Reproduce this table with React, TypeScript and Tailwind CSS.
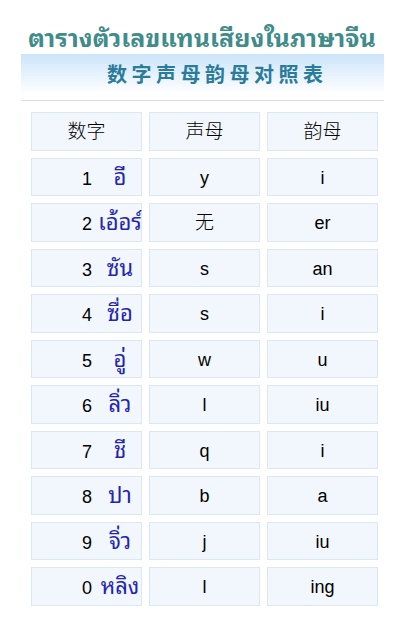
import React from "react";

const rows: [string, string, string, string][] = [
  ["1", "อี", "y", "i"],
  ["2", "เอ้อร์", "无", "er"],
  ["3", "ซัน", "s", "an"],
  ["4", "ซื่อ", "s", "i"],
  ["5", "อู่", "w", "u"],
  ["6", "ลิ่ว", "l", "iu"],
  ["7", "ชี", "q", "i"],
  ["8", "ปา", "b", "a"],
  ["9", "จิ่ว", "j", "iu"],
  ["0", "หลิง", "l", "ing"],
];

const cell =
  "h-[38.5px] bg-[#f2f7fd] border border-[#dbe7f3] flex items-center text-[18px] text-black";
const cjk = " font-['Noto_Sans_CJK_SC',sans-serif] font-light text-[19px] pb-[2px]";

export default function App() {
  return (
    <div className="w-[408px] h-[637px] bg-white font-['Liberation_Sans',Arial,sans-serif]">
      <div className="pt-[20px] pl-[28px] text-[25px] font-bold leading-[32px] text-[#3f8c8a] font-['Noto_Sans_Thai_Looped','Loma','Garuda','Norasi','Tahoma',sans-serif] whitespace-nowrap">
        ตารางตัวเลขแทนเสียงในภาษาจีน
      </div>
      <div className="ml-[21px] w-[363px] mt-[2px]">
        <div className="h-[40px] bg-gradient-to-b from-[#cce4fa] to-white flex items-center pl-[86px]">
          <span className="text-[20px] font-bold tracking-[4.5px] text-[#2b7b9b] font-['Noto_Sans_CJK_SC',sans-serif] leading-none">
            数字声母韵母对照表
          </span>
        </div>
        <div className="mt-[6px] h-[1px] bg-[#dcdcdc]" />
      </div>
      <div className="ml-[31px] mt-[11px] grid grid-cols-[111px_111px_111px] gap-[7px]">
        <div className={cell + " justify-center" + cjk}>数字</div>
        <div className={cell + " justify-center" + cjk}>声母</div>
        <div className={cell + " justify-center" + cjk}>韵母</div>
        {rows.map(([d, th, s, y], i) => (
          <React.Fragment key={i}>
            <div className={cell + " pl-[50px] pb-[2px] overflow-visible"}>
              <div className="flex items-baseline leading-none">
                <span className="w-[14px]">{d}</span>
                <span className="w-[48px] text-center whitespace-nowrap text-[22px] text-[#2424b0] font-['Noto_Sans_Thai_Looped','Loma','Garuda','Norasi','Tahoma',sans-serif]">
                  {th}
                </span>
              </div>
            </div>
            <div className={cell + " justify-center" + (s === "无" ? cjk : " pt-[3px]")}>{s}</div>
            <div className={cell + " justify-center pt-[3px]"}>{y}</div>
          </React.Fragment>
        ))}
      </div>
    </div>
  );
}
